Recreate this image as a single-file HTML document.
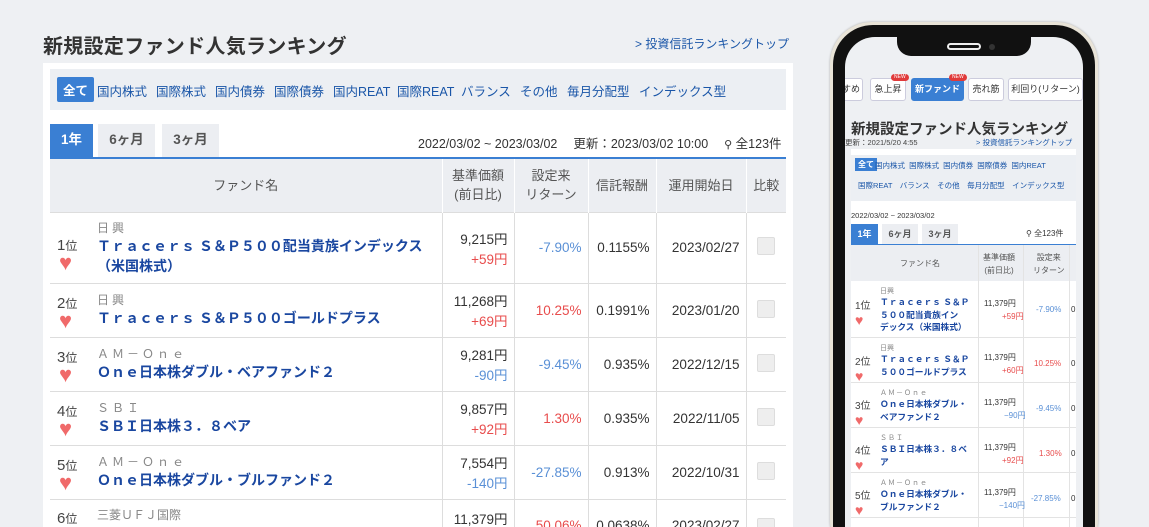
<!DOCTYPE html>
<html style="height:527px;overflow:hidden"><head><meta charset="utf-8"><style>
*{box-sizing:border-box;margin:0;padding:0}
html,body{width:1149px;height:527px;overflow:hidden}
body{background:#eef0f3;font-family:"Liberation Sans","Noto Sans CJK JP",sans-serif;color:#333;position:relative}
#wrap{position:absolute;left:0;top:0;width:1149px;height:527px;overflow:hidden}
.abs{position:absolute}
.title{left:43px;top:30px;font-size:20px;font-weight:bold;color:#333;letter-spacing:.3px}
.toplink{left:635px;top:35px;font-size:12px;color:#1a56a8}
.panel{left:43px;top:63px;width:750px;height:464px;background:#fff}
.filter{left:50px;top:69px;width:736px;height:41px;background:#eceff3}
.filter span{position:absolute;top:12px;font-size:12.5px;color:#1a56a8}
.filter .on{top:8px;left:7px;background:#3a7fd3;color:#fff;font-weight:bold;padding:3px 6px;border-radius:2px}
.tab{top:124px;height:34px;background:#eceef2;font-size:13.5px;color:#555;text-align:center;line-height:32px;font-weight:bold}
.tab.on{background:#3a7fd3;color:#fff}
.meta{top:133px;font-size:12.5px;color:#333}
.line{left:50px;top:157px;width:736px;height:2px;background:#3a7fd3}
.tw{position:absolute;left:50px;top:159px;width:736px;height:368px;overflow:hidden}
table{border-collapse:collapse;width:736px;font-size:13.5px}
th{background:#eceef2;color:#555;font-weight:normal;font-size:13px;height:53px;line-height:19px;border-left:1px solid #fff}
td{border-top:1px solid #ddd;border-left:1px solid #ddd;vertical-align:middle}
td:first-child{border-left:none}
.rk{font-size:15px;color:#444}
.rk small{font-size:12px}
.heart{color:#f06a6a;font-size:22px;line-height:18px;display:block;margin-left:2px}
.co{font-size:12px;color:#888;letter-spacing:3px}
.fn{font-size:14px;font-weight:bold;color:#1a47a0;letter-spacing:0;line-height:20px}
.r{text-align:right;padding-right:6px}
.red{color:#e84c4c}.blu{color:#5a90d6}
.cb{display:inline-block;width:18px;height:18px;background:#eee;border:1px solid #ddd;border-radius:2px}
.ph{left:830px;top:22px;width:268px;height:540px;border-radius:42px;background:#e9e4d8;box-shadow:0 0 2px #aaa}
.bz{left:833px;top:25px;width:262px;height:540px;border-radius:40px;background:#111}
.scr{left:845px;top:37px;width:238px;height:490px;border-radius:30px 30px 0 0;background:#eef0f3;overflow:hidden}
.notch{left:897px;top:36px;width:134px;height:20px;background:#111;border-radius:0 0 14px 14px}
.nb{top:41px;height:23px;background:#fff;border:1px solid #ccd;border-radius:3px;font-size:9px;line-height:21px;text-align:center;color:#333}
.new{top:37px;font-size:5px;background:#e03a3a;color:#fff;border-radius:5px;padding:0 3px;line-height:7px}
.pt{font-size:8px;position:absolute}
.mtab{font-size:9px;text-align:center;line-height:20px;font-weight:bold;background:#eceef2;color:#555;height:20px}
</style></head><body><div id="wrap">
<div class="abs title">新規設定ファンド人気ランキング</div>
<div class="abs toplink">&gt; 投資信託ランキングトップ</div>
<div class="abs panel"></div>
<div class="abs filter">
<span class="on">全て</span><span style="left:47px">国内株式</span><span style="left:106px">国際株式</span><span style="left:165px">国内債券</span><span style="left:224px">国際債券</span><span style="left:283px">国内REAT</span><span style="left:347px">国際REAT</span><span style="left:411px">バランス</span><span style="left:470px">その他</span><span style="left:517px">毎月分配型</span><span style="left:589px">インデックス型</span>
</div>
<div class="abs tab on" style="left:50px;width:43px">1年</div>
<div class="abs tab" style="left:98px;width:57px">6ヶ月</div>
<div class="abs tab" style="left:162px;width:57px">3ヶ月</div>
<div class="abs meta" style="left:418px">2022/03/02 ~ 2023/03/02　 更新：2023/03/02 10:00　 <span style="font-size:11px">&#9906;</span> 全123件</div>
<div class="abs line"></div>
<div class="tw"><table>
<colgroup><col style="width:392px"><col style="width:72px"><col style="width:74px"><col style="width:68px"><col style="width:90px"><col style="width:40px"></colgroup>
<tr><th style="border-left:none">ファンド名</th><th>基準価額<br>(前日比)</th><th>設定来<br>リターン</th><th>信託報酬</th><th>運用開始日</th><th>比較</th></tr>
<tr style="height:71px"><td><div style="display:flex;padding-left:7px"><div style="width:40px;padding-top:18px"><span class="rk">1<small>位</small></span><span class="heart">♥</span></div><div><div class="co">日興</div><div class="fn">Ｔｒａｃｅｒｓ Ｓ＆Ｐ５００配当貴族インデックス<br>（米国株式）</div></div></div></td><td class="r">9,215円<br><span class="red">+59円</span></td><td class="r blu">-7.90%</td><td class="r">0.1155%</td><td class="r">2023/02/27</td><td style="text-align:center"><span class="cb"></span></td></tr>
<tr style="height:54px"><td><div style="display:flex;padding-left:7px"><div style="width:40px;padding-top:4px"><span class="rk">2<small>位</small></span><span class="heart">♥</span></div><div><div class="co">日興</div><div class="fn">Ｔｒａｃｅｒｓ Ｓ＆Ｐ５００ゴールドプラス</div></div></div></td><td class="r">11,268円<br><span class="red">+69円</span></td><td class="r red">10.25%</td><td class="r">0.1991%</td><td class="r">2023/01/20</td><td style="text-align:center"><span class="cb"></span></td></tr>
<tr style="height:54px"><td><div style="display:flex;padding-left:7px"><div style="width:40px;padding-top:4px"><span class="rk">3<small>位</small></span><span class="heart">♥</span></div><div><div class="co">ＡＭ－Ｏｎｅ</div><div class="fn">Ｏｎｅ日本株ダブル・ベアファンド２</div></div></div></td><td class="r">9,281円<br><span class="blu">-90円</span></td><td class="r blu">-9.45%</td><td class="r">0.935%</td><td class="r">2022/12/15</td><td style="text-align:center"><span class="cb"></span></td></tr>
<tr style="height:54px"><td><div style="display:flex;padding-left:7px"><div style="width:40px;padding-top:4px"><span class="rk">4<small>位</small></span><span class="heart">♥</span></div><div><div class="co">ＳＢＩ</div><div class="fn">ＳＢＩ日本株３．８ベア</div></div></div></td><td class="r">9,857円<br><span class="red">+92円</span></td><td class="r red">1.30%</td><td class="r">0.935%</td><td class="r">2022/11/05</td><td style="text-align:center"><span class="cb"></span></td></tr>
<tr style="height:54px"><td><div style="display:flex;padding-left:7px"><div style="width:40px;padding-top:4px"><span class="rk">5<small>位</small></span><span class="heart">♥</span></div><div><div class="co">ＡＭ－Ｏｎｅ</div><div class="fn">Ｏｎｅ日本株ダブル・ブルファンド２</div></div></div></td><td class="r">7,554円<br><span class="blu">-140円</span></td><td class="r blu">-27.85%</td><td class="r">0.913%</td><td class="r">2022/10/31</td><td style="text-align:center"><span class="cb"></span></td></tr>
<tr style="height:54px"><td style="vertical-align:top;padding-top:6px"><div style="display:flex;padding-left:7px"><div style="width:40px;padding-top:4px"><span class="rk">6<small>位</small></span></div><div><div class="co" style="letter-spacing:0">三菱ＵＦＪ国際</div></div></div></td><td class="r" style="vertical-align:top;padding-top:8px">11,379円</td><td class="r red" style="vertical-align:top;padding-top:18px">50.06%</td><td class="r" style="vertical-align:top;padding-top:18px">0.0638%</td><td class="r" style="vertical-align:top;padding-top:18px">2023/02/27</td><td style="text-align:center;vertical-align:top;padding-top:18px"><span class="cb"></span></td></tr>
</table></div>

<div class="abs ph"></div>
<div class="abs bz"></div>
<div class="abs scr">
 <div class="abs nb" style="left:-6px;width:24px">すめ</div>
 <div class="abs nb" style="left:25px;width:36px">急上昇</div>
 <div class="abs nb" style="left:66px;width:53px;background:#3a7fd3;color:#fff;border-color:#3a7fd3;font-weight:bold">新ファンド</div>
 <div class="abs nb" style="left:123px;width:36px">売れ筋</div>
 <div class="abs nb" style="left:163px;width:75px">利回り(リターン)</div>
 <div class="abs new" style="left:46px">NEW</div><div class="abs new" style="left:104px">NEW</div>
 <div class="abs" style="left:6px;top:81px;font-size:14.5px;font-weight:bold;color:#333">新規設定ファンド人気ランキング</div>
 <div class="pt" style="left:0;top:100px;color:#444;font-size:7.5px">更新：2021/5/20 4:55</div>
 <div class="pt" style="left:131px;top:100px;color:#1a56a8;font-size:7.5px">&gt; 投資信託ランキングトップ</div>
 <div class="abs" style="left:6px;top:112px;width:225px;height:420px;background:#fff"></div>
 <div class="abs" style="left:6px;top:118px;width:225px;height:46px;background:#eceff3"></div>
 <div class="pt" style="left:10px;top:121px;background:#3a7fd3;color:#fff;font-weight:bold;padding:1px 3px">全て</div>
 <div class="pt" style="left:30px;top:123px;color:#1a56a8;word-spacing:2px;font-size:7.5px">国内株式 国際株式 国内債券 国際債券 国内REAT</div>
 <div class="pt" style="left:13px;top:143px;color:#1a56a8;font-size:7.5px">国際REAT　バランス　その他　毎月分配型　インデックス型</div>
 <div class="pt" style="left:6px;top:174px;color:#333;font-size:7.5px">2022/03/02 ~ 2023/03/02</div>
 <div class="abs mtab" style="left:6px;width:27px;top:187px;background:#3a7fd3;color:#fff">1年</div>
 <div class="abs mtab" style="left:37px;width:36px;top:187px">6ヶ月</div>
 <div class="abs mtab" style="left:77px;width:36px;top:187px">3ヶ月</div>
 <div class="pt" style="left:181px;top:191px;color:#333">⚲ 全123件</div>
 <div class="abs" style="left:6px;top:207px;width:225px;height:1px;background:#3a7fd3"></div>
 <div class="abs" style="left:6px;top:208px;width:225px;height:36px;background:#eceef2"></div>
 <div class="pt" style="left:55px;top:221px;color:#555">ファンド名</div>
 <div class="pt" style="left:138px;top:214px;color:#555;text-align:center;line-height:13px">基準価額<br>(前日比)</div>
 <div class="pt" style="left:188px;top:214px;color:#555;text-align:center;line-height:13px">設定来<br>リターン</div>
 <div class="abs" style="left:133px;top:208px;width:1px;height:320px;background:#e3e3e3"></div>
 <div class="abs" style="left:178px;top:208px;width:1px;height:320px;background:#e3e3e3"></div>
 <div class="abs" style="left:224px;top:208px;width:1px;height:320px;background:#e3e3e3"></div>
 <div class="abs" style="left:6px;top:300px;width:225px;height:1px;background:#e3e3e3"></div>
 <div class="abs" style="left:6px;top:345px;width:225px;height:1px;background:#e3e3e3"></div>
 <div class="abs" style="left:6px;top:390px;width:225px;height:1px;background:#e3e3e3"></div>
 <div class="abs" style="left:6px;top:435px;width:225px;height:1px;background:#e3e3e3"></div>
 <div class="abs" style="left:6px;top:480px;width:225px;height:1px;background:#e3e3e3"></div>
 <div class="pt" style="left:10px;top:260px;font-size:10px;color:#444">1位<br><span style="color:#f06a6a;font-size:14px">♥</span></div>
 <div class="pt" style="left:35px;top:249px;color:#888;font-size:7px">日興</div>
 <div class="pt" style="left:35px;top:259px;color:#1a47a0;font-weight:bold;line-height:12.5px;font-size:8.7px">Ｔｒａｃｅｒｓ Ｓ＆Ｐ<br>５００配当貴族イン<br>デックス（米国株式）</div>
 <div class="pt" style="left:139px;top:260px;color:#333;line-height:13px">11,379円<br><span class="red" style="padding-left:18px">+59円</span></div>
 <div class="pt" style="left:191px;top:268px" ><span class="blu">-7.90%</span></div>
 <div class="pt" style="left:10px;top:316px;font-size:10px;color:#444">2位<br><span style="color:#f06a6a;font-size:14px">♥</span></div>
 <div class="pt" style="left:35px;top:306px;color:#888;font-size:7px">日興</div>
 <div class="pt" style="left:35px;top:316px;color:#1a47a0;font-weight:bold;line-height:12.5px;font-size:8.7px">Ｔｒａｃｅｒｓ Ｓ＆Ｐ<br>５００ゴールドプラス</div>
 <div class="pt" style="left:139px;top:314px;color:#333;line-height:13px">11,379円<br><span class="red" style="padding-left:18px">+60円</span></div>
 <div class="pt" style="left:189px;top:322px"><span class="red">10.25%</span></div>
 <div class="pt" style="left:10px;top:360px;font-size:10px;color:#444">3位<br><span style="color:#f06a6a;font-size:14px">♥</span></div>
 <div class="pt" style="left:35px;top:351px;color:#888;font-size:7px;letter-spacing:1px">ＡＭ－Ｏｎｅ</div>
 <div class="pt" style="left:35px;top:361px;color:#1a47a0;font-weight:bold;line-height:12.5px;font-size:8.7px">Ｏｎｅ日本株ダブル・<br>ベアファンド２</div>
 <div class="pt" style="left:139px;top:359px;color:#333;line-height:13px">11,379円<br><span class="blu" style="padding-left:20px">−90円</span></div>
 <div class="pt" style="left:191px;top:367px"><span class="blu">-9.45%</span></div>
 <div class="pt" style="left:10px;top:405px;font-size:10px;color:#444">4位<br><span style="color:#f06a6a;font-size:14px">♥</span></div>
 <div class="pt" style="left:35px;top:396px;color:#888;font-size:7px;letter-spacing:1px">ＳＢＩ</div>
 <div class="pt" style="left:35px;top:406px;color:#1a47a0;font-weight:bold;line-height:12.5px;font-size:8.7px">ＳＢＩ日本株３．８ベ<br>ア</div>
 <div class="pt" style="left:139px;top:404px;color:#333;line-height:13px">11,379円<br><span class="red" style="padding-left:18px">+92円</span></div>
 <div class="pt" style="left:194px;top:412px"><span class="red">1.30%</span></div>
 <div class="pt" style="left:10px;top:450px;font-size:10px;color:#444">5位<br><span style="color:#f06a6a;font-size:14px">♥</span></div>
 <div class="pt" style="left:35px;top:441px;color:#888;font-size:7px;letter-spacing:1px">ＡＭ－Ｏｎｅ</div>
 <div class="pt" style="left:35px;top:451px;color:#1a47a0;font-weight:bold;line-height:12.5px;font-size:8.7px">Ｏｎｅ日本株ダブル・<br>ブルファンド２</div>
 <div class="pt" style="left:139px;top:449px;color:#333;line-height:13px">11,379円<br><span class="blu" style="padding-left:15px">−140円</span></div>
 <div class="pt" style="left:186px;top:457px"><span class="blu">-27.85%</span></div>
 <div class="pt" style="left:226px;top:268px;color:#333">0</div><div class="pt" style="left:226px;top:322px;color:#333">0</div><div class="pt" style="left:226px;top:367px;color:#333">0</div><div class="pt" style="left:226px;top:412px;color:#333">0</div><div class="pt" style="left:226px;top:457px;color:#333">0</div>
</div>
<div class="abs notch"></div>
<div class="abs" style="left:947px;top:43px;width:34px;height:7px;border:2px solid #eee;border-radius:4px"></div>
<div class="abs" style="left:989px;top:44px;width:6px;height:6px;border-radius:3px;background:#333"></div>
</div></body></html>
